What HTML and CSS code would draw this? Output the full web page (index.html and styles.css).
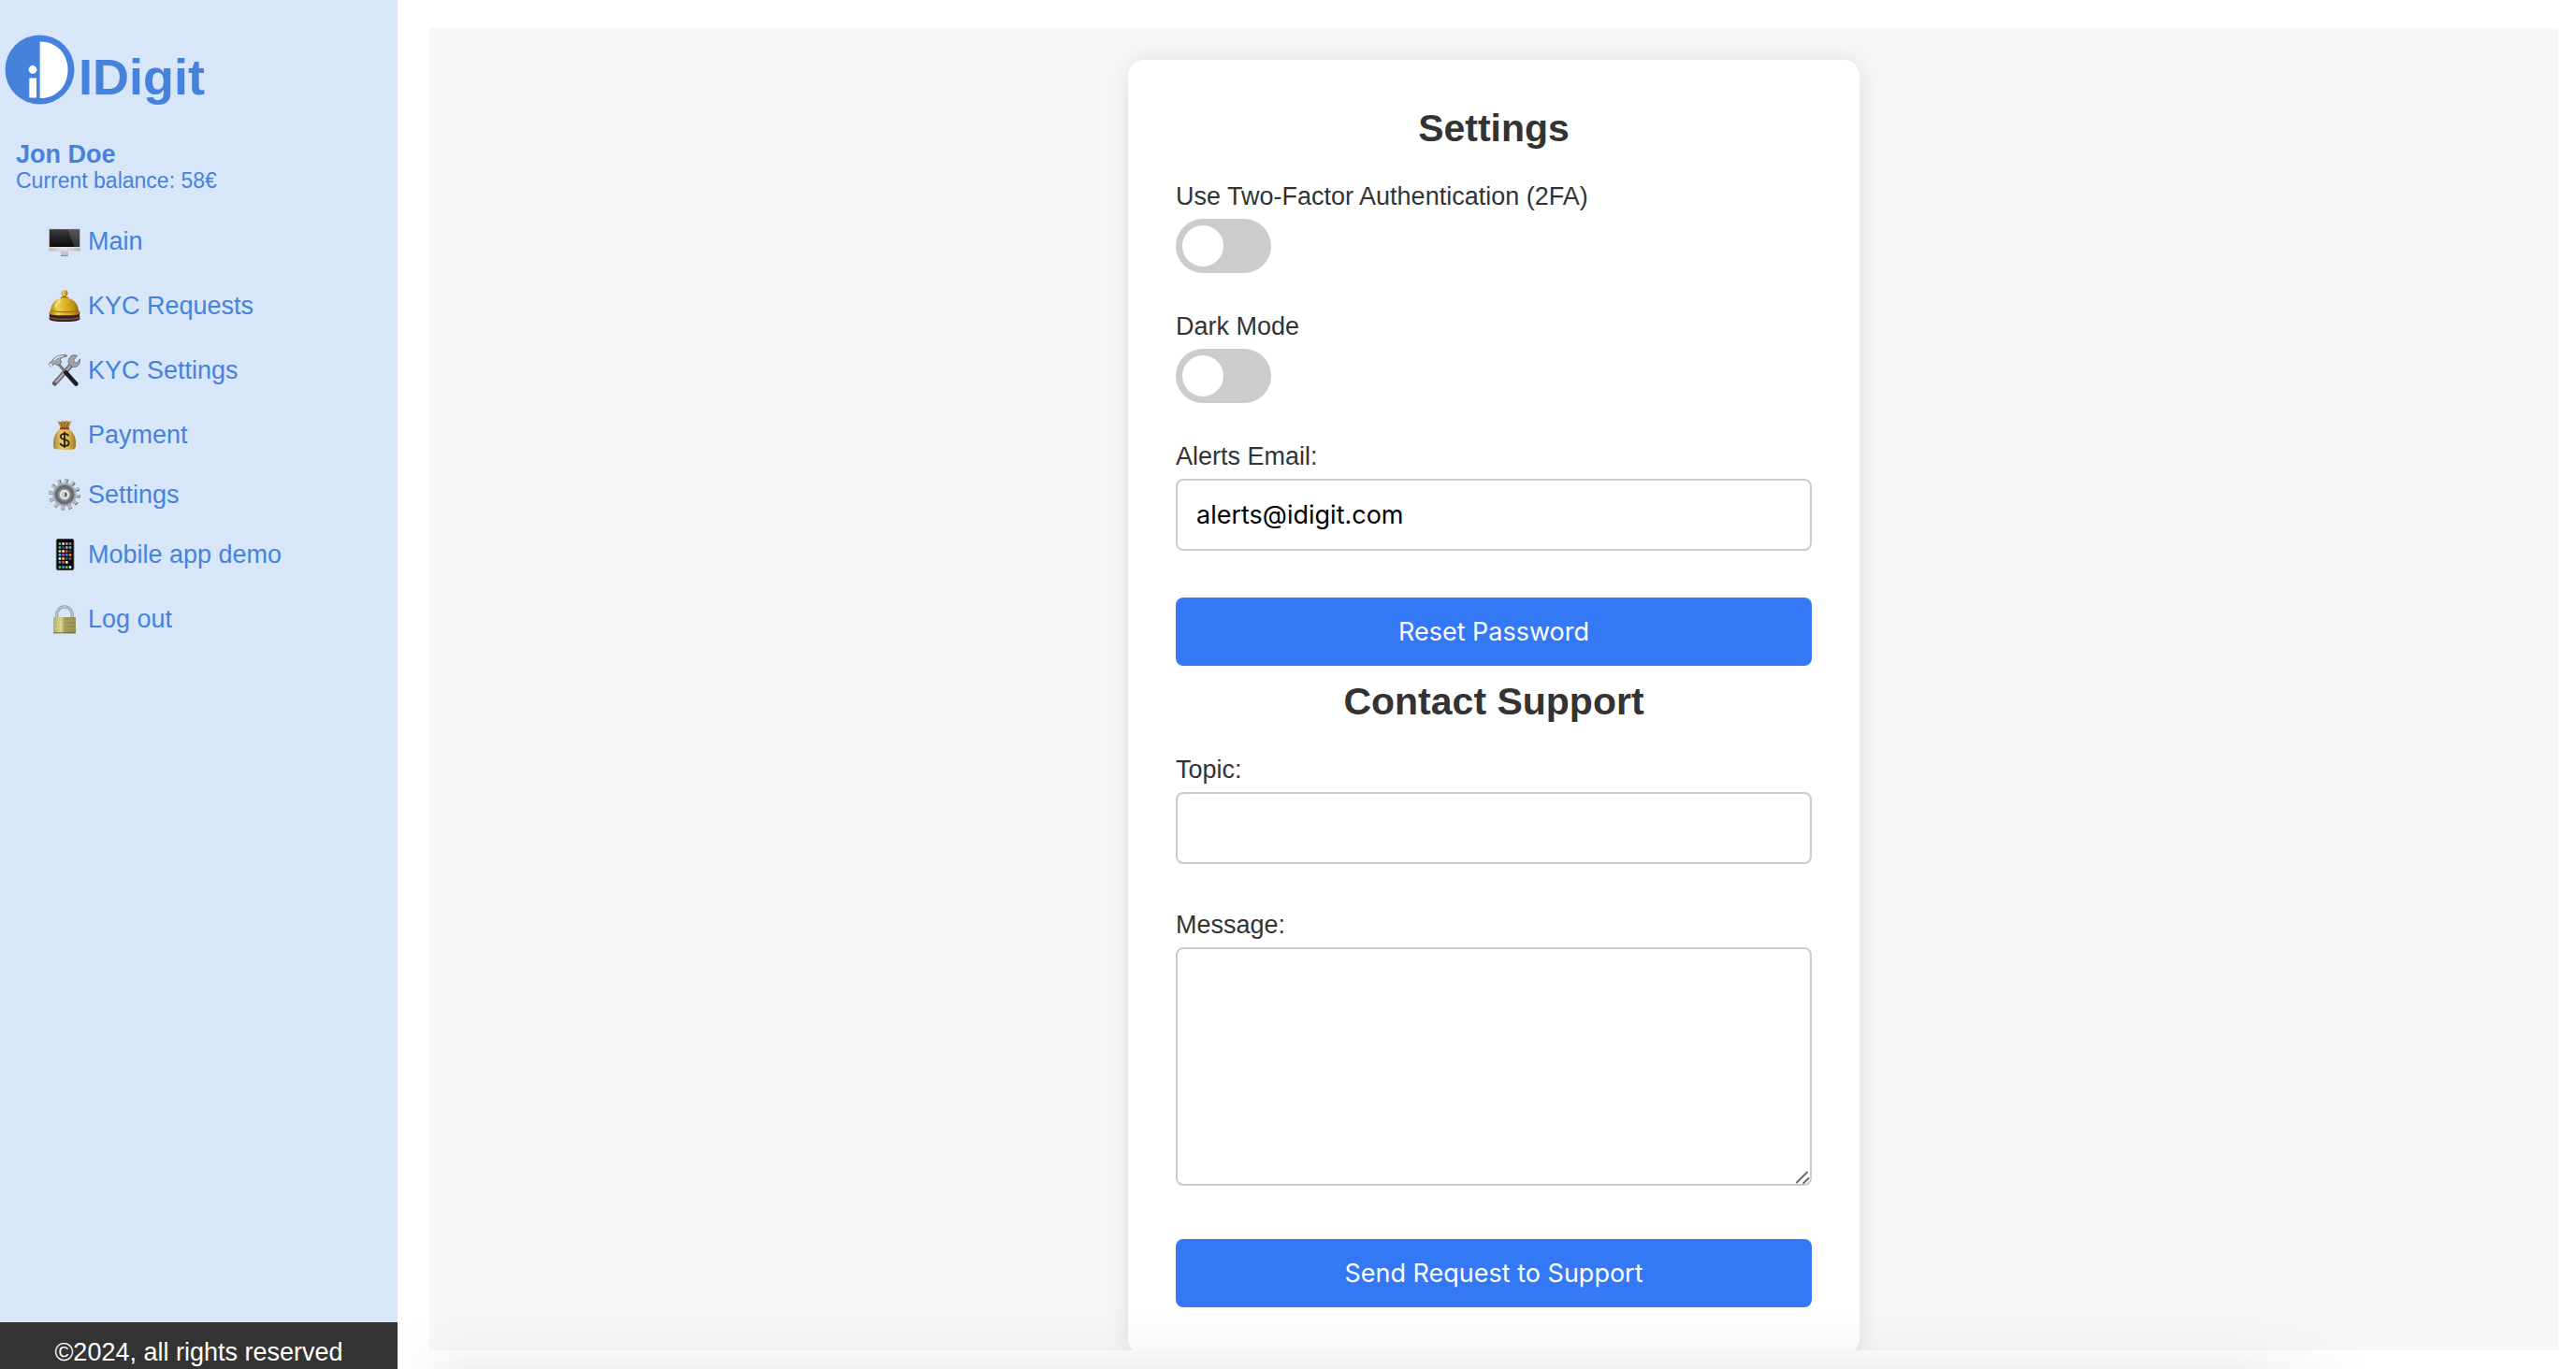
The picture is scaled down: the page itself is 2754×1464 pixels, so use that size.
FILE: index.html
```html
<!DOCTYPE html>
<html lang="en">
<head>
<meta charset="utf-8">
<meta name="viewport" content="width=device-width, initial-scale=1">
<title>IDigit – Settings</title>
<link rel="stylesheet" href="styles.css">
</head>
<body>
<div class="app">
  <aside class="sidebar">
    <div class="brand">
      <svg class="brand-logo" viewBox="0 0 75 75" aria-hidden="true">
        <circle cx="37.5" cy="37.5" r="37" fill="#4682dc"/>
        <path d="M37.700 7.500C56 7.500 67.500 21 67.500 37.700S56 68 37.700 68z" fill="#fff"/>
        <circle cx="30" cy="37.5" r="4.4" fill="#fff"/>
        <path d="M26.3 46.500h7.700v21h-7.700z" fill="#fff"/>
      </svg>
      <span class="brand-name">IDigit</span>
    </div>
    <div class="account">
      <div class="account-name">Jon Doe</div>
      <div class="account-balance">Current balance: 58€</div>
    </div>
    <nav class="nav" aria-label="Main menu">
      <a class="nav-item" href="#main">
        <svg class="nav-icon" viewBox="0 0 34 34" aria-hidden="true">
          <defs>
            <linearGradient id="screen" x1="0" y1="0" x2="0" y2="1"><stop offset="0" stop-color="#3c3c3c"/><stop offset="1" stop-color="#0b0b0b"/></linearGradient>
            <linearGradient id="chin" x1="0" y1="0" x2="1" y2="0"><stop offset="0" stop-color="#b9b9bb"/><stop offset=".5" stop-color="#e4e4e6"/><stop offset="1" stop-color="#b4b4b6"/></linearGradient>
          </defs>
          <path d="M13 27h8v6h-8z" fill="#c4c5c9"/><path d="M13 31.8h8V33h-8z" fill="#8f9094"/>
          <rect y="3.4" width="34" height="24" rx="1" fill="url(#chin)"/>
          <rect x="1" y="4.2" width="32" height="19" fill="url(#screen)"/>
          <path d="M20.500 4.200H33v19h-5.500z" fill="#fff" opacity=".14"/>
          <path d="M0 23.200h34v1H0z" fill="#f1f1f2"/>
        </svg>
        Main
      </a>
      <a class="nav-item" href="#kyc-requests">
        <svg class="nav-icon" viewBox="0 0 34 34" aria-hidden="true">
          <defs>
            <linearGradient id="bell" x1="0" y1="0" x2="1" y2="0"><stop offset="0" stop-color="#a8790e"/><stop offset=".3" stop-color="#f0d050"/><stop offset=".55" stop-color="#dcae24"/><stop offset=".8" stop-color="#bd8f1a"/><stop offset="1" stop-color="#80570b"/></linearGradient>
          </defs>
          <path d="M1 25h32l.4 6.500C31 33.500 26 34 17 34S3 33.500.6 31.500z" fill="#3b211b"/>
          <path d="M1.500 29.800c7 2.200 24 2.200 31 0" stroke="#8a6258" stroke-width="1.200" fill="none"/>
          <rect x="15" y="5" width="4" height="5" fill="#8a6010"/>
          <ellipse cx="17" cy="3.400" rx="3.400" ry="3.200" fill="url(#bell)"/>
          <path d="M13.500 8.500h7" stroke="#a87c18" stroke-width="2" stroke-linecap="round"/>
          <path d="M2 22C2.800 13.500 8.500 8.500 17 8.500S31.200 13.500 32 22l2 3c-.3 1.800-7 2.300-17 2.300S.3 26.800 0 25z" fill="url(#bell)"/>
          <path d="M2 22c6 2.200 24 2.200 30 0" stroke="#94680f" stroke-width="1.100" fill="none"/>
          <path d="M7.500 18c.6-3.500 2.500-5.500 5-6.500" stroke="#fff3a8" stroke-width="1.800" stroke-linecap="round" fill="none" opacity=".75"/>
        </svg>
        KYC Requests
      </a>
      <a class="nav-item" href="#kyc-settings">
        <svg class="nav-icon" viewBox="0 0 34 34" aria-hidden="true">
          <path d="M6.500 31 24.500 11" stroke="#5d5458" stroke-width="5" stroke-linecap="round"/>
          <path d="M6.500 31 24.500 11" stroke="#aaa6ad" stroke-width="2.800" stroke-linecap="round"/>
          <circle cx="6.600" cy="31" r="1.200" fill="#4d4347"/>
          <path d="M30.500 1.500 26.800 6l.6 2.700 3 .2 3-4c1 4-1.500 8.300-5.400 8.500-2 .1-3.500-.3-5-1.500-3-3-2.200-8 1-10.200 2-1.200 4.500-1.300 6.500-.2z" fill="#9fa2a9" stroke="#5f636b" stroke-width=".8"/>
          <path d="M10 9.500 19 20" stroke="#74777d" stroke-width="3"/>
          <path d="M18.500 19.500 29.300 31.500" stroke="#1b1d1f" stroke-width="4.700" stroke-linecap="round"/>
          <path d="M.5 9.500 4 6.800C6 2.500 12 0 19 .7l.3 1.500c-3.500.2-6 1.300-6.800 3.300l1 3.500-3.500 3-3.500-2.300-3.500 3.500c-1.200-.4-2.300-2-2.500-3.700z" fill="#a2a6ae" stroke="#565a62" stroke-width=".8"/>
          <path d="M5.500 6.500C7.500 3.500 12 1.800 16 1.700" stroke="#eef0f3" stroke-width="1.200" fill="none"/>
          <path d="m1.200 9.800 2.600 3" stroke="#f5f5f7" stroke-width="1.500"/>
        </svg>
        KYC Settings
      </a>
      <a class="nav-item" href="#payment">
        <svg class="nav-icon" viewBox="0 0 34 34" aria-hidden="true">
          <defs>
            <linearGradient id="bag" x1="0" y1="0" x2="1" y2="0"><stop offset="0" stop-color="#a9822c"/><stop offset=".35" stop-color="#e8cb68"/><stop offset=".7" stop-color="#d8b24c"/><stop offset="1" stop-color="#9a7222"/></linearGradient>
          </defs>
          <path d="m9.500 2.500 3.500.7 1.500-1.400 2.500.9 3-1 1.300 1.200 3.200-.7-3.500 8.300h-8z" fill="#b58a3a"/>
          <path d="m13 3.500 2.300 6M17 3v6.500M21 3.500l-2 6" stroke="#7c571c" stroke-width="1"/>
          <path d="M13 10h8c4 2.500 7.700 8 8 14.500.1 4 .3 6-1.500 7.500-1.500 1.200-19.500 1.200-21 0C4.700 30.500 5 28 5.200 24.500 5.500 18 9 12.500 13 10z" fill="url(#bag)"/>
          <path d="M12.800 10.300h8.400" stroke="#8f3d22" stroke-width="2" stroke-linecap="round"/>
          <path d="M21.300 18.300c-.6-1.600-2.200-2.400-4.200-2.400-2.500 0-4.200 1.200-4.200 3.200 0 4.200 8.800 2 8.800 6.400 0 2.200-2 3.400-4.500 3.400-2.400 0-4.200-1-4.800-3M17 13.800v17" stroke="#2b2008" stroke-width="1.800" fill="none"/>
        </svg>
        Payment
      </a>
      <a class="nav-item nav-item-tight" href="#settings" aria-current="page">
        <svg class="nav-icon" viewBox="0 0 34 34" aria-hidden="true">
          <circle cx="17" cy="17" r="14.600" fill="none" stroke="#6f747a" stroke-width="4.400" stroke-dasharray="3.400 4.240"/>
          <circle cx="16.500" cy="16.700" r="14.300" fill="none" stroke="#bcc0c5" stroke-width="4" stroke-dasharray="2.600 4.880"/>
          <circle cx="17" cy="17" r="11.700" fill="#8a8f94" stroke="#a9adb2" stroke-width="2"/>
          <circle cx="17" cy="17" r="8.800" fill="none" stroke="#666b71" stroke-width="3"/>
          <circle cx="17" cy="17" r="6.400" fill="#a4a8ad" stroke="#7c8187" stroke-width="1"/>
          <circle cx="17" cy="17" r="4.300" fill="#c9ccd0" stroke="#f1f2f3" stroke-width="1.400"/>
          <path d="M17.500 14.300a2.800 2.800 0 0 1 0 5.400z" fill="#45494e"/>
        </svg>
        Settings
      </a>
      <a class="nav-item nav-item-tight" href="#mobile">
        <svg class="nav-icon" viewBox="0 0 34 34" aria-hidden="true">
          <rect x="8.300" y=".3" width="18.600" height="33.400" rx="2" fill="#08080a" stroke="#4b4b4f" stroke-width=".8"/>
          <g stroke-width="2.600">
            <path d="M10.600 5.500h2.600" stroke="#56c552"/><path d="M14.300 5.500h2.600" stroke="#e8e8e8"/><path d="M18 5.500h2.600" stroke="#c98ad6"/><path d="M21.700 5.500h2.600" stroke="#8d8d8d"/>
            <path d="M10.600 9.500h2.600" stroke="#3da2e8"/><path d="M14.300 9.500h2.600" stroke="#555"/><path d="M18 9.500h2.600" stroke="#c9a887"/><path d="M21.700 9.500h2.600" stroke="#3fc8d6"/>
            <path d="M10.600 13.500h2.600" stroke="#f0d046"/><path d="M14.300 13.500h2.600" stroke="#f4f4f4"/><path d="M18 13.500h2.600" stroke="#e0593c"/><path d="M21.700 13.500h2.600" stroke="#444"/>
            <path d="M10.600 17.400h2.600" stroke="#4ac7e8"/><path d="M14.300 17.400h2.600" stroke="#cf52d8"/><path d="M18 17.400h2.600" stroke="#3d8af0"/><path d="M21.700 17.400h2.600" stroke="#ef8f2e"/>
            <path d="M10.600 21.400h2.600" stroke="#f4f4f4"/><path d="M14.300 21.400h2.600" stroke="#ecd75a"/><path d="M18 21.400h2.600" stroke="#555"/><path d="M21.700 21.400h2.600" stroke="#666"/>
            <path d="M10.600 25.300h2.600" stroke="#3b8ce0"/><path d="M14.300 25.300h2.600" stroke="#e4573e"/><path d="M18 25.300h2.600" stroke="#f4f4f4"/>
            <path d="M10.600 30.500h2.600" stroke="#56c552"/><path d="M14.300 30.500h2.600" stroke="#4aa5ee"/><path d="M18 30.500h2.600" stroke="#62cf60"/><path d="M21.700 30.500h2.600" stroke="#f0f0f0"/>
          </g>
        </svg>
        Mobile app demo
      </a>
      <a class="nav-item" href="#logout">
        <svg class="nav-icon" viewBox="0 0 34 34" aria-hidden="true">
          <defs>
            <linearGradient id="lock" x1="0" y1="0" x2="1" y2="0"><stop offset="0" stop-color="#b5ab66"/><stop offset=".35" stop-color="#dcd592"/><stop offset=".5" stop-color="#a39a5b"/><stop offset="1" stop-color="#938a50"/></linearGradient>
          </defs>
          <path d="M8.800 16v-3.500a8.200 8.800 0 0 1 16.400 0V16" fill="none" stroke="#7f8b99" stroke-width="3"/>
          <path d="M8.800 16v-3.500a8.200 8.800 0 0 1 16.400 0V16" fill="none" stroke="#c3d2e2" stroke-width="1.400"/>
          <rect x="5" y="15" width="24" height="17.300" rx=".8" fill="url(#lock)"/>
          <path d="M5 19h24M5 23h24M5 27h24" stroke="#fff" stroke-width=".6" opacity=".25"/>
          <path d="M5 31.300h24v1H5z" fill="#766e38"/>
        </svg>
        Log out
      </a>
    </nav>
    <footer class="footer">©2024, all rights reserved</footer>
  </aside>

  <main class="content">
    <div class="card">
      <form class="form">
        <h2 class="title">Settings</h2>
        <div class="field">
          <label for="two-factor">Use Two-Factor Authentication (2FA)</label>
          <input class="switch" type="checkbox" id="two-factor">
        </div>
        <div class="field">
          <label for="dark-mode">Dark Mode</label>
          <input class="switch" type="checkbox" id="dark-mode">
        </div>
        <div class="field field-text">
          <label for="email">Alerts Email:</label>
          <input class="input" type="email" id="email" value="alerts@idigit.com">
        </div>
        <button class="button" type="button">Reset Password</button>
      </form>
      <form class="form">
        <h2 class="title">Contact Support</h2>
        <div class="field field-text">
          <label for="topic">Topic:</label>
          <input class="input" type="text" id="topic">
        </div>
        <div class="field field-message">
          <label for="message">Message:</label>
          <textarea class="input input-message" id="message"></textarea>
        </div>
        <button class="button" type="submit">Send Request to Support</button>
      </form>
    </div>
  </main>
</div>
</body>
</html>
```

FILE: styles.css
```css
* {
  box-sizing: border-box;
}

body {
  margin: 0;
  background: #fff;
  color: #333;
  font: 27px/31px "Liberation Sans", Arial, sans-serif;
}

.app {
  display: grid;
  grid-template-columns: 425px minmax(0, 1fr);
  height: 100vh;
}

/* soft shade along the bottom edge of the window */
.app::after {
  content: "";
  position: fixed;
  right: 8%;
  bottom: 0;
  left: 425px;
  height: 64px;
  background: linear-gradient(transparent, rgba(0, 0, 0, 0.02) 60%, rgba(0, 0, 0, 0.06));
  mask-image: linear-gradient(90deg, transparent, #000 80px, #000 calc(100% - 160px), transparent);
  pointer-events: none;
}

/* Sidebar */

.sidebar {
  display: flex;
  flex-direction: column;
  background: #d7e6f9;
  color: #4682dc;
}

.brand {
  display: flex;
  align-items: flex-end;
  gap: 4px;
  padding: 37px 5px 0;
}

.brand-logo {
  width: 75px;
  height: 75px;
}

.brand-name {
  font-size: 54px;
  font-weight: bold;
  line-height: 59px;
}

.account {
  padding: 38px 17px 0;
}

.account-name {
  font-weight: bold;
}

.account-balance {
  font-size: 23px;
  line-height: 25px;
}

.nav {
  display: flex;
  flex-direction: column;
  padding-left: 52px;
}

.nav-item {
  display: flex;
  align-items: center;
  gap: 8px;
  padding-top: 35px;
  color: inherit;
  text-decoration: none;
}

.nav-item-tight {
  padding-top: 30px;
}

.nav-icon {
  width: 34px;
  height: 34px;
}

.footer {
  margin-top: auto;
  padding: 17px 0 2px;
  background: #333;
  color: #fff;
  text-align: center;
}

/* Content */

.content {
  margin: 30px 19px 20px 34px;
  padding: 34px;
  overflow: auto;
  scrollbar-width: none;
  background: #f7f7f7;
}

.card {
  display: flex;
  flex-direction: column;
  gap: 16px;
  max-width: 782px;
  margin: 0 auto;
  padding: 51px;
  border-radius: 17px;
  background: #fff;
  box-shadow: 0 0 26px rgba(0, 0, 0, 0.1);
}

.form {
  display: flex;
  flex-direction: column;
}

.title {
  margin: 0 0 35px;
  font-size: 41px;
  line-height: 45px;
  text-align: center;
}

.field {
  display: flex;
  flex-direction: column;
  align-items: flex-start;
  gap: 8px;
  margin-bottom: 42px;
}

.field-text {
  margin-bottom: 50px;
}

.field-message {
  margin-bottom: 57px;
}

.switch {
  appearance: none;
  width: 102px;
  height: 58px;
  margin: 0;
  padding: 7px;
  border-radius: 29px;
  background: #ccc;
  cursor: pointer;
}

.switch::before {
  content: "";
  display: block;
  width: 44px;
  height: 44px;
  border-radius: 50%;
  background: #fff;
}

.switch:checked {
  background: #3478f6;
}

.switch:checked::before {
  margin-left: auto;
}

.input {
  width: 100%;
  height: 77px;
  padding: 0 20px;
  border: 2px solid #ccc;
  border-radius: 8px;
  background: #fff;
  color: #000;
  font: 27px/31px Inter, sans-serif;
}

.input-message {
  height: 255px;
  padding: 20px;
  resize: vertical;
}

.input-message::-webkit-resizer {
  background: url("data:image/svg+xml,%3Csvg xmlns='http://www.w3.org/2000/svg' viewBox='0 0 15 15'%3E%3Cpath d='M1 13.500 12 2.500M8 14.500 13.500 9' stroke='%23666' stroke-width='1.800' stroke-linecap='round'/%3E%3C/svg%3E") no-repeat;
}

.button {
  height: 73px;
  padding: 0 20px;
  border: 0;
  border-radius: 8px;
  background: #3478f6;
  color: #fff;
  font: 27px/31px Inter, sans-serif;
  cursor: pointer;
}
```
